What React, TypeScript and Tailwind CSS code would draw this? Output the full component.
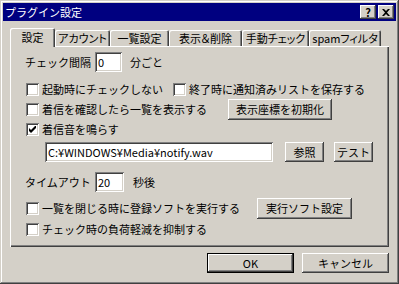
import React from 'react';

const raised =
  'shadow-[inset_-1px_-1px_#404040,inset_1px_1px_#ffffff,inset_-2px_-2px_#808080,inset_2px_2px_#d4d0c8]';
const sunken =
  'shadow-[inset_1px_1px_#808080,inset_-1px_-1px_#ffffff,inset_2px_2px_#404040,inset_-2px_-2px_#d4d0c8]';

function Button({ label, className = '', isDefault = false }: { label: string; className?: string; isDefault?: boolean }) {
  if (isDefault) {
    return (
      <div className={`border border-black bg-[#d4d0c8] ${className}`}>
        <div className={`flex h-full w-full items-center justify-center ${raised}`}>{label}</div>
      </div>
    );
  }
  return <div className={`flex items-center justify-center bg-[#d4d0c8] ${raised} ${className}`}>{label}</div>;
}

function Checkbox({ label, checked = false, className = '' }: { label: string; checked?: boolean; className?: string }) {
  return (
    <div className={`flex items-center gap-[3px] ${className}`}>
      <span className={`flex h-[13px] w-[13px] shrink-0 items-center justify-center bg-white ${sunken}`}>
        {checked && (
          <svg width="7" height="7" viewBox="0 0 7 7">
            <path d="M0 2 L2 4 L7 -1 L7 2 L2 7 L0 5 Z" fill="#000" />
          </svg>
        )}
      </span>
      <span className="whitespace-nowrap">{label}</span>
    </div>
  );
}

function TextBox({ value, className = '' }: { value: string; className?: string }) {
  return (
    <div className={`flex items-center bg-white pl-[3px] ${sunken} ${className}`}>
      <span className="whitespace-nowrap">{value}</span>
    </div>
  );
}

const tabs = [
  { label: 'アカウント', w: 'w-[55px]' },
  { label: '一覧設定', w: 'w-[59px]' },
  { label: '表示＆削除', w: 'w-[73px]' },
  { label: '手動チェック', w: 'w-[67px]' },
  { label: 'spamフィルタ', w: 'w-[72px]' },
];

export default function App() {
  return (
    <div className="h-[284px] w-[399px] overflow-hidden bg-[#d4d0c8] p-[3px] font-['Noto_Sans_CJK_JP','Noto_Sans',sans-serif] text-[11px] leading-none text-black shadow-[inset_-1px_-1px_#404040,inset_1px_1px_#d4d0c8,inset_-2px_-2px_#808080,inset_2px_2px_#ffffff]">
      {/* タイトルバー */}
      <div className="flex h-[18px] items-center bg-[#000080] pl-[2px] pr-[2px]">
        <span className="text-white">プラグイン設定</span>
        <div className="ml-auto flex gap-[2px]">
          <div className={`flex h-[14px] w-[16px] items-center justify-center bg-[#d4d0c8] text-[11px] font-bold ${raised}`}>?</div>
          <div className={`flex h-[14px] w-[16px] items-center justify-center bg-[#d4d0c8] ${raised}`}>
            <svg width="8" height="7" viewBox="0 0 8 7">
              <path d="M0 0h2l2 2 2-2h2L5 3.5 8 7H6L4 5 2 7H0l3-3.5z" fill="#000" />
            </svg>
          </div>
        </div>
      </div>

      {/* タブ */}
      <div className="mx-[7px] mt-[7px] flex h-[18px] items-end [font-feature-settings:'palt']">
        <div className="relative z-10 mb-[-1px] flex h-[19px] w-[45px] items-center justify-center rounded-t-[2px] bg-[#d4d0c8] shadow-[inset_1px_1px_#ffffff,inset_-1px_0_#404040,inset_-2px_0_#808080]">
          設定
        </div>
        {tabs.map((t) => (
          <div
            key={t.label}
            className={`flex h-[16px] items-center justify-center whitespace-nowrap rounded-t-[2px] pt-[1px] shadow-[inset_1px_1px_#ffffff,inset_-1px_0_#404040,inset_-2px_0_#808080] ${t.w}`}
          >
            {t.label}
          </div>
        ))}
      </div>

      {/* パネル */}
      <div className="mx-[7px] h-[201px] shadow-[inset_1px_1px_#ffffff,inset_-1px_-1px_#404040,inset_-2px_-2px_#808080]">
        <div className="flex flex-col">
          <div className="mt-[6px] flex h-[20px] items-center pl-[15px]">
            <span className="w-[70px]">チェック間隔</span>
            <TextBox value="0" className="h-[20px] w-[27px]" />
            <span className="ml-[8px]">分ごと</span>
          </div>

          <div className="mt-[7px] flex h-[20px] items-center pl-[16px]">
            <Checkbox label="起動時にチェックしない" className="w-[147px]" />
            <Checkbox label="終了時に通知済みリストを保存する" />
          </div>

          <div className="flex h-[20px] items-center pl-[16px]">
            <Checkbox label="着信を確認したら一覧を表示する" className="w-[202px]" />
            <Button label="表示座標を初期化" className="h-[21px] w-[104px]" />
          </div>

          <div className="flex h-[20px] items-center pl-[16px]">
            <Checkbox label="着信音を鳴らす" checked />
          </div>

          <div className="mt-[3px] flex h-[20px] items-center pl-[35px]">
            <TextBox value="C:¥WINDOWS¥Media¥notify.wav" className="h-[20px] w-[228px]" />
            <Button label="参照" className="ml-[12px] h-[20px] w-[39px]" />
            <Button label="テスト" className="ml-[10px] h-[20px] w-[39px]" />
          </div>

          <div className="mt-[10px] flex h-[20px] items-center pl-[15px]">
            <span className="w-[70px]">タイムアウト</span>
            <TextBox value="20" className="h-[20px] w-[29px]" />
            <span className="ml-[9px]">秒後</span>
          </div>

          <div className="mt-[6px] flex h-[21px] items-center pl-[16px]">
            <Checkbox label="一覧を閉じる時に登録ソフトを実行する" className="w-[231px]" />
            <Button label="実行ソフト設定" className="h-[21px] w-[95px]" />
          </div>

          <div className="flex h-[20px] items-center pl-[16px]">
            <Checkbox label="チェック時の負荷軽減を抑制する" />
          </div>
        </div>
      </div>

      {/* ボタン */}
      <div className="mt-[6px] flex justify-end gap-[8px] pr-[7px]">
        <Button label="OK" isDefault className="h-[20px] w-[87px]" />
        <Button label="キャンセル" className="h-[20px] w-[87px]" />
      </div>
    </div>
  );
}
